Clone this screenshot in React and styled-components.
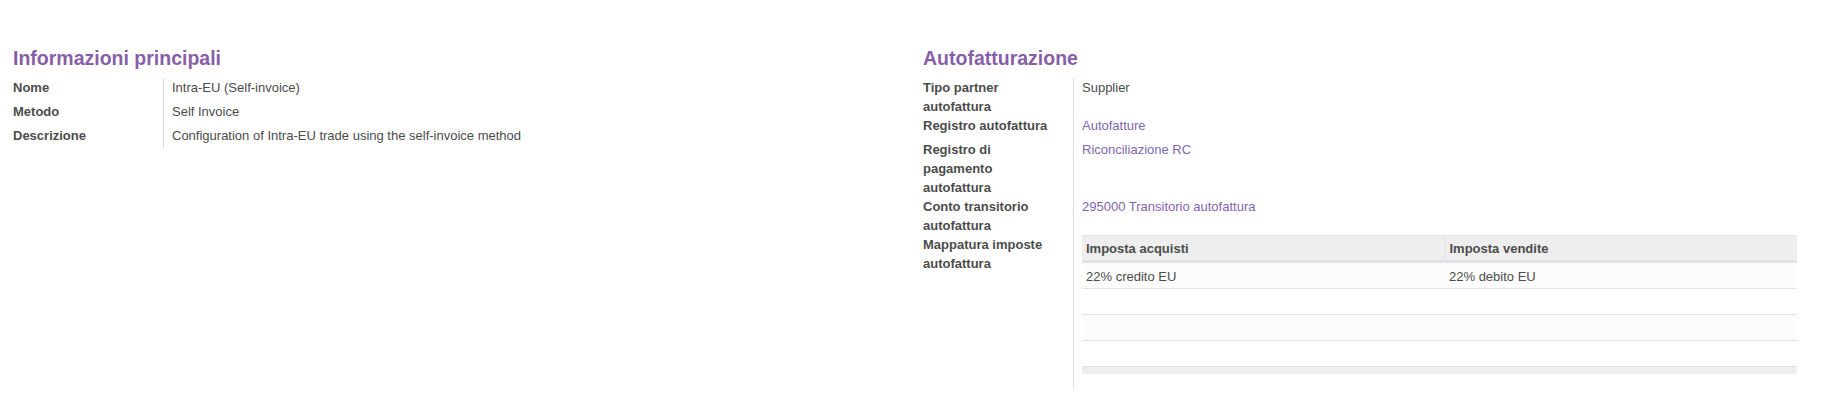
import React from "react";
import styled, { createGlobalStyle } from "styled-components";

const Global = createGlobalStyle`
  html, body { margin: 0; padding: 0; background: #ffffff; }
  body {
    font-family: "Liberation Sans", Arial, Helvetica, sans-serif;
    font-size: 13px;
    color: #4c4c4c;
  }
`;

const Sheet = styled.div`
  display: grid;
  grid-template-columns: 910px 1fr;
  padding: 48px 0 0 13px;
  min-height: 365px;
  box-sizing: border-box;
`;

const Section = styled.section`
  display: flex;
  flex-direction: column;
`;

const Title = styled.h2`
  margin: 0 0 9px;
  font-size: 19.5px;
  line-height: 21px;
  font-weight: 700;
  color: #875fa8;
`;

const FieldGrid = styled.div`
  display: grid;
  grid-template-columns: ${(p) => p.$labelWidth}px 1fr;
`;

const Label = styled.div`
  box-sizing: border-box;
  border-right: 1px solid #dcdcdc;
  padding-right: 6px;
  font-weight: 700;
  color: #4c4c4c;
  line-height: 19px;
`;

const Value = styled.div`
  padding-left: 8px;
  min-height: ${(p) => p.$minHeight || 24}px;
  line-height: 19px;
  color: #4c4c4c;
`;

const Link = styled.a`
  color: #7f66b2;
  text-decoration: none;
  cursor: pointer;
`;

const TableWrap = styled.div`
  width: 715px;
  margin-bottom: 14px;
`;

const Table = styled.table`
  width: 100%;
  border-collapse: collapse;
  table-layout: fixed;
`;

const HeadCell = styled.th`
  text-align: left;
  font-weight: 700;
  color: #4c4c4c;
  background: #eeeeee;
  border-top: 1px solid #e2e2e2;
  border-bottom: 3px solid #dee2e6;
  border-left: ${(p) => (p.$sep ? "1px solid #dee2e6" : "none")};
  padding: 2px 4px 2px;
  line-height: 19px;
  height: 26px;
  box-sizing: border-box;
`;

const Row = styled.tr`
  background: ${(p) => (p.$odd ? "#fcfcfc" : "#ffffff")};
`;

const Cell = styled.td`
  padding: 4px 4px 2px;
  line-height: 19px;
  height: 26px;
  box-sizing: border-box;
  border-bottom: 1px solid #e2e2e2;
  color: #4c4c4c;
`;

const FootCell = styled.td`
  background: #eeeeee;
  height: 7px;
  padding: 0;
`;

const mainFields = [
  ["Nome", "Intra-EU (Self-invoice)"],
  ["Metodo", "Self Invoice"],
  ["Descrizione", "Configuration of Intra-EU trade using the self-invoice method"],
];

const rows = [
  ["22% credito EU", "22% debito EU"],
  ["", ""],
  ["", ""],
  ["", ""],
];

export default function App() {
  return (
    <>
      <Global />
      <Sheet>
        <Section>
          <Title>Informazioni principali</Title>
          <FieldGrid $labelWidth={151}>
            {mainFields.map(([l, v], i) => (
              <React.Fragment key={l}>
                <Label>{l}</Label>
                <Value $minHeight={i === 2 ? 23 : 24}>{v}</Value>
              </React.Fragment>
            ))}
          </FieldGrid>
        </Section>
        <Section>
          <Title>Autofatturazione</Title>
          <FieldGrid $labelWidth={151}>
            <Label>
              Tipo partner
              <br />
              autofattura
            </Label>
            <Value>Supplier</Value>
            <Label>Registro autofattura</Label>
            <Value>
              <Link>Autofatture</Link>
            </Value>
            <Label>
              Registro di
              <br />
              pagamento
              <br />
              autofattura
            </Label>
            <Value>
              <Link>Riconciliazione RC</Link>
            </Value>
            <Label>
              Conto transitorio
              <br />
              autofattura
            </Label>
            <Value>
              <Link>295000 Transitorio autofattura</Link>
            </Value>
            <Label>
              Mappatura imposte
              <br />
              autofattura
            </Label>
            <Value>
              <TableWrap>
                <Table>
                  <colgroup>
                    <col style={{ width: "363px" }} />
                    <col />
                  </colgroup>
                  <thead>
                    <tr>
                      <HeadCell>Imposta acquisti</HeadCell>
                      <HeadCell $sep>Imposta vendite</HeadCell>
                    </tr>
                  </thead>
                  <tbody>
                    {rows.map((r, i) => (
                      <Row key={i} $odd={i % 2 === 0}>
                        <Cell>{r[0]}</Cell>
                        <Cell>{r[1]}</Cell>
                      </Row>
                    ))}
                  </tbody>
                  <tfoot>
                    <tr>
                      <FootCell />
                      <FootCell />
                    </tr>
                  </tfoot>
                </Table>
              </TableWrap>
            </Value>
          </FieldGrid>
        </Section>
      </Sheet>
    </>
  );
}
